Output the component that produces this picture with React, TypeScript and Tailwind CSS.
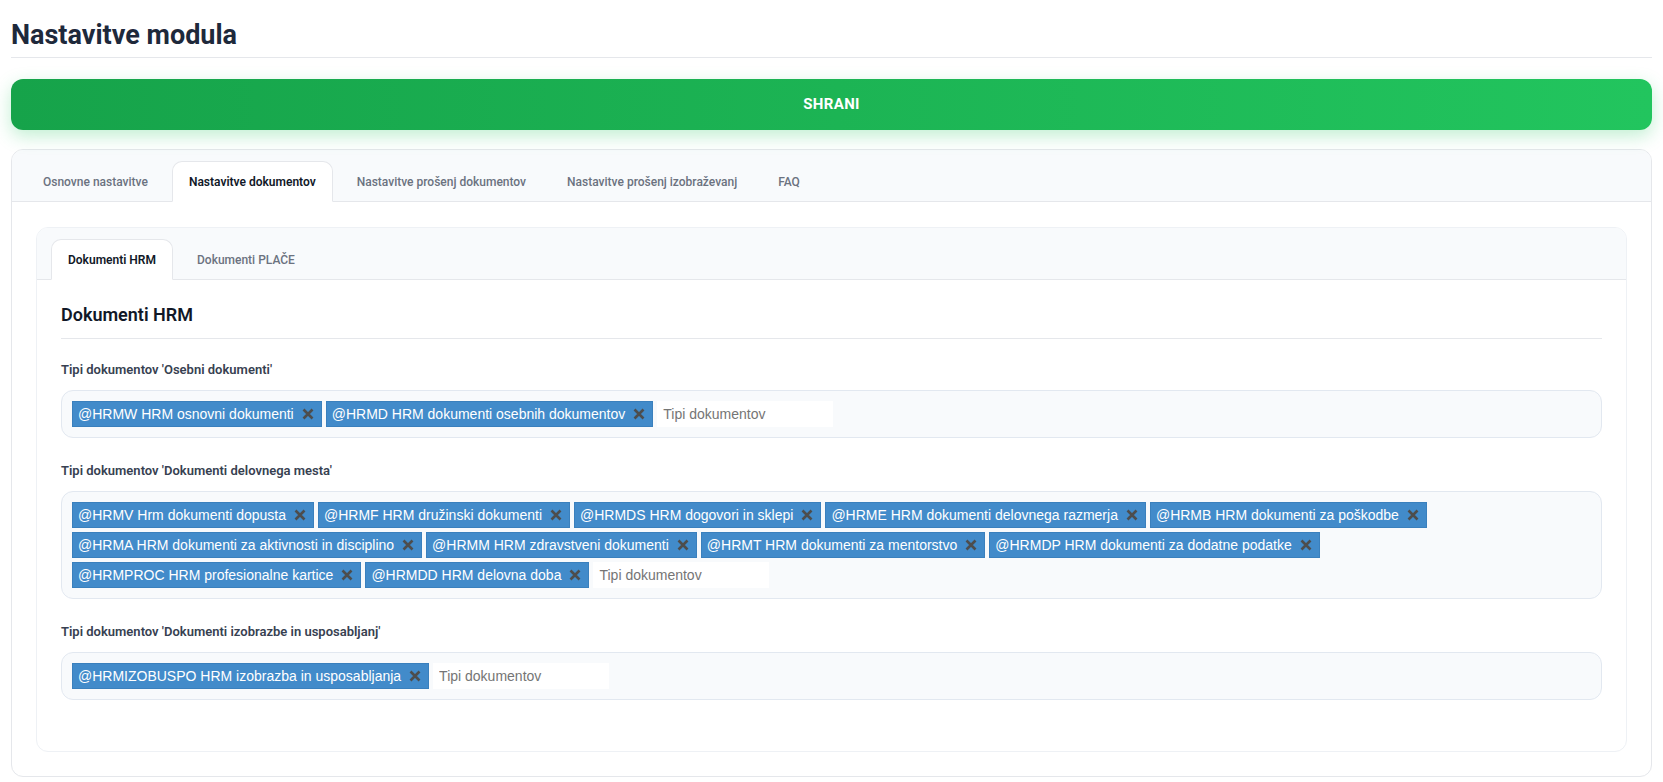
import { useState } from "react";

const ui = { fontFamily: "Roboto, 'Noto Sans', sans-serif" };
const arial = { fontFamily: "'Liberation Sans', Arial, sans-serif" };

const osebni = ["@HRMW HRM osnovni dokumenti", "@HRMD HRM dokumenti osebnih dokumentov"];

const delovno = [
  "@HRMV Hrm dokumenti dopusta",
  "@HRMF HRM družinski dokumenti",
  "@HRMDS HRM dogovori in sklepi",
  "@HRME HRM dokumenti delovnega razmerja",
  "@HRMB HRM dokumenti za poškodbe",
  "@HRMA HRM dokumenti za aktivnosti in disciplino",
  "@HRMM HRM zdravstveni dokumenti",
  "@HRMT HRM dokumenti za mentorstvo",
  "@HRMDP HRM dokumenti za dodatne podatke",
  "@HRMPROC HRM profesionalne kartice",
  "@HRMDD HRM delovna doba",
];

const izobrazba = ["@HRMIZOBUSPO HRM izobrazba in usposabljanja"];

function Tag({ label }: { label: string }) {
  return (
    <span
      className="flex items-center h-[26px] pl-[5px] pr-[6px] bg-[#428bca] border border-[#3a80bd] text-white text-[14px] leading-none"
      style={arial}
    >
      <span>{label}</span>
      <svg width="14" height="14" viewBox="0 0 14 14" className="ml-[7px] shrink-0">
        <path d="M2.5 2.5 L11.5 11.5 M11.5 2.5 L2.5 11.5" stroke="#4d4d4d" strokeWidth="2.6" />
      </svg>
    </span>
  );
}

function TagField({ label, tags }: { label: string; tags: string[] }) {
  return (
    <div className="mb-6">
      <div className="text-[13px] leading-[18px] font-semibold text-[#374151] mb-[11px]">{label}</div>
      <div className="flex flex-wrap gap-x-1 gap-y-1 p-[10px] bg-[#f8fafc] border border-[#e2e8f0] rounded-xl">
        {tags.map((t) => (
          <Tag key={t} label={t} />
        ))}
        <input
          placeholder="Tipi dokumentov"
          className="h-[26px] w-[176px] bg-white pl-[6px] text-[14px] text-[#333] placeholder-[#757575] outline-none"
          style={arial}
        />
      </div>
    </div>
  );
}

function Tabs({ items, active, onSelect }: { items: string[]; active: number; onSelect: (i: number) => void }) {
  return (
    <div className="flex gap-[7px] pl-[14px] pt-[11px] bg-[#f8fafc] border-b border-[#e5e7eb]">
      {items.map((t, i) => (
        <button
          key={t}
          onClick={() => onSelect(i)}
          className={
            i === active
              ? "h-[41px] -mb-px px-4 text-xs font-semibold text-[#111827] bg-white border border-[#e5e7eb] border-b-white rounded-t-[10px]"
              : "h-[41px] -mb-px px-4 text-xs font-medium text-[#6b7280] border border-transparent"
          }
        >
          {t}
        </button>
      ))}
    </div>
  );
}

export default function App() {
  const [tab, setTab] = useState(1);
  const [subTab, setSubTab] = useState(0);

  return (
    <div className="min-h-screen bg-white px-[11px] pb-[6px]" style={ui}>
      <h1 className="pt-[17px] pb-[4px] text-[27px] leading-[36px] font-bold text-[#1e293b] border-b border-[#e5e7eb]">
        Nastavitve modula
      </h1>

      <button className="mt-[21px] w-full h-[51px] rounded-xl bg-linear-to-r from-[#16a34a] to-[#22c55e] text-white text-[15px] font-bold tracking-wide shadow-[0_6px_18px_rgba(34,197,94,0.28)]">
        SHRANI
      </button>

      <div className="mt-[19px] bg-white border border-[#e5e7eb] rounded-xl overflow-hidden">
        <Tabs
          items={[
            "Osnovne nastavitve",
            "Nastavitve dokumentov",
            "Nastavitve prošenj dokumentov",
            "Nastavitve prošenj izobraževanj",
            "FAQ",
          ]}
          active={tab}
          onSelect={setTab}
        />

        <div className="px-6 pt-[25px] pb-6">
          <div className="border border-[#eef1f5] rounded-xl overflow-hidden bg-white">
            <Tabs items={["Dokumenti HRM", "Dokumenti PLAČE"]} active={subTab} onSelect={setSubTab} />

            <div className="px-6 pt-[21px] pb-[27px]">
              <h2 className="pb-[9px] text-lg leading-7 font-semibold text-[#111827] border-b border-[#e5e7eb]">
                Dokumenti HRM
              </h2>
              <div className="mt-[22px]">
                <TagField label="Tipi dokumentov 'Osebni dokumenti'" tags={osebni} />
                <TagField label="Tipi dokumentov 'Dokumenti delovnega mesta'" tags={delovno} />
                <TagField label="Tipi dokumentov 'Dokumenti izobrazbe in usposabljanj'" tags={izobrazba} />
              </div>
            </div>
          </div>
        </div>
      </div>
    </div>
  );
}
